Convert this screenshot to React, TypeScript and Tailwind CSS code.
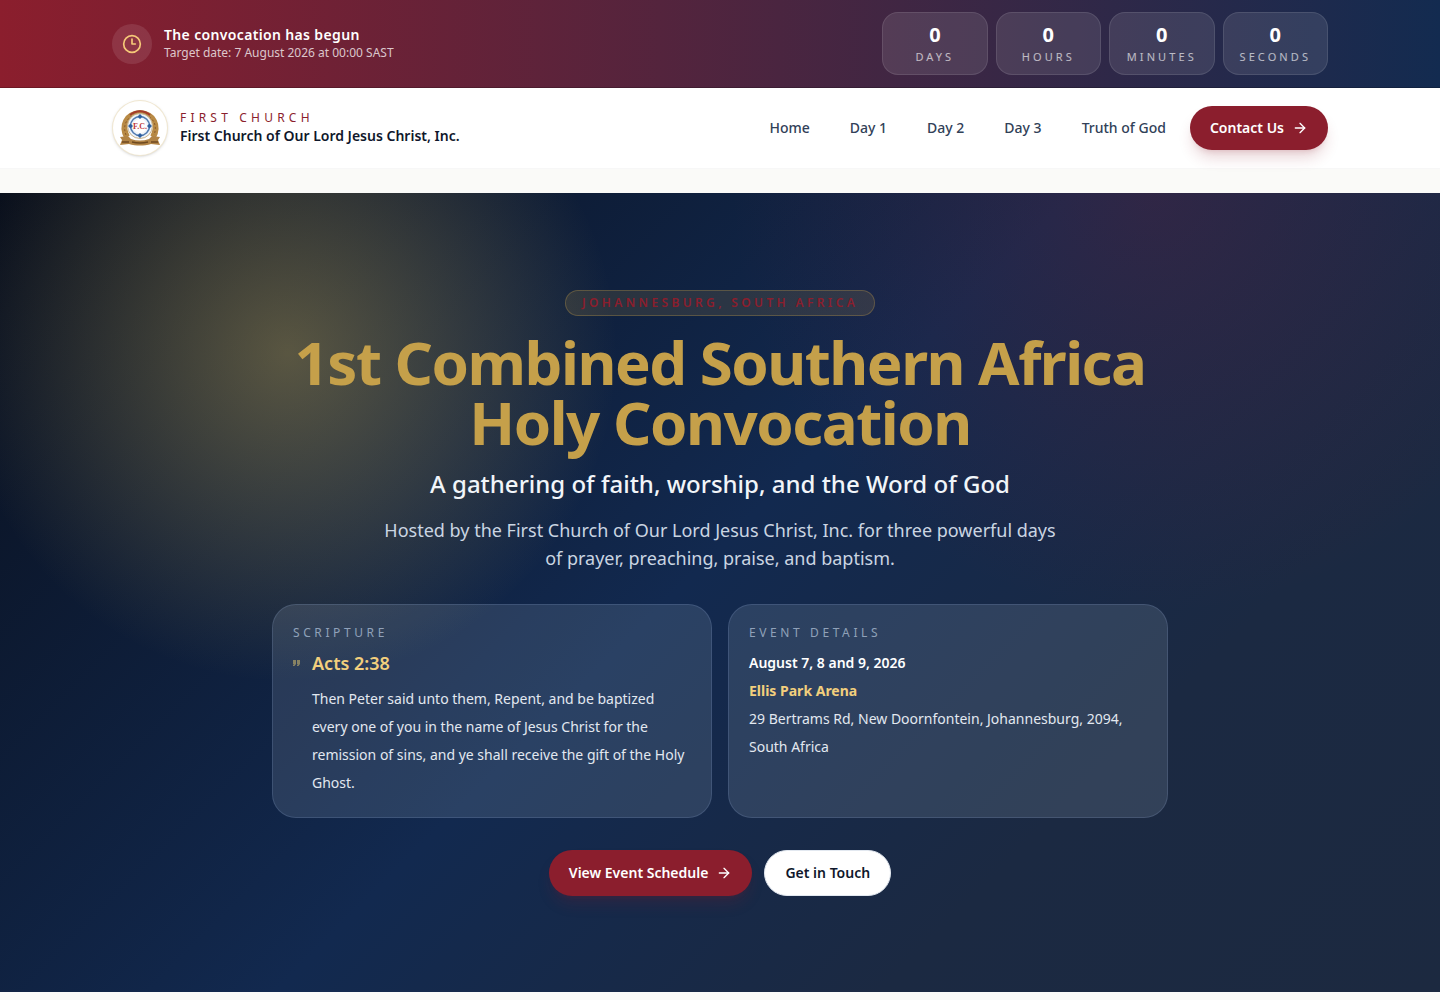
import { ArrowRight, Clock3 } from "lucide-react";

const navItems = ["Home", "Day 1", "Day 2", "Day 3", "Truth of God"];
const countdown = ["Days", "Hours", "Minutes", "Seconds"];

function Crest() {
  return (
    <svg viewBox="0 0 44 44" className="size-11" role="img" aria-label="First Church crest">
      <path d="M9 31C3 20 8 8 22 7c14 1 19 13 13 24" fill="none" stroke="#b88a45" strokeWidth="6" />
      <path d="M8 29C4 19 9 9 22 8c13 1 18 11 14 21" fill="none" stroke="#8a5a2c" strokeWidth="1" strokeDasharray="2 2" />
      <path d="M12 9C18 4 26 4 32 9" fill="none" stroke="#a33b2b" strokeWidth="2" />
      <circle cx="22" cy="20" r="12.500" fill="#eef3f9" stroke="#c9b28a" />
      <circle cx="22" cy="20" r="9.500" fill="none" stroke="#4f7ab0" strokeWidth="1.500" />
      <path d="M22 8l2.500 2.500-2.500 2.500-2.500-2.500zM22 27l2.500 2.500-2.500 2.500-2.500-2.500zM10 20l2.500-2.500 2.500 2.500-2.500 2.500zM29 20l2.500-2.500 2.500 2.500-2.500 2.500z" fill="#2f5f9e" />
      <circle cx="22" cy="20" r="7" fill="#fff" />
      <text x="22" y="23" textAnchor="middle" fontSize="8" fontWeight="700" fontFamily="Liberation Serif, serif" fill="#c03a3a">F.C.</text>
      <path d="M2 31l8-1 3 3c6 2 12 2 18 0l3-3 8 1-2 3 2 5-9-1c-7 2-15 2-22 0l-9 1 2-5z" fill="#b18345" />
      <path d="M4 36h7M33 36h7M14 36c5 1.300 11 1.300 16 0" stroke="#6f4a20" strokeWidth="1.500" fill="none" />
    </svg>
  );
}

export default function App() {
  return (
    <div className="min-h-screen bg-[#fafaf8] font-['Noto_Sans',sans-serif] text-slate-900">
      <div className="border-b border-black/20 bg-[linear-gradient(90deg,#8b1e2d,#132b50)] text-white">
        <div className="mx-auto flex max-w-7xl items-center justify-between gap-4 px-8 py-3">
          <div className="flex items-center gap-3">
            <div className="flex size-10 items-center justify-center rounded-full bg-white/10 text-[#f6c978]">
              <Clock3 size={20} />
            </div>
            <div>
              <p className="text-sm leading-[18px] font-semibold tracking-[0.025em]">The convocation has begun</p>
              <p className="text-xs leading-[18px] text-white/75">Target date: 7 August 2026 at 00:00 SAST</p>
            </div>
          </div>
          <div className="grid grid-cols-4 gap-2">
            {countdown.map((unit) => (
              <div key={unit} className="rounded-2xl border border-white/10 bg-white/10 px-4 pt-2 pb-2.5 text-center">
                <div className="text-xl leading-7 font-bold">0</div>
                <div className="text-[11px] leading-[15px] tracking-[0.28em] text-white/65 uppercase">{unit}</div>
              </div>
            ))}
          </div>
        </div>
      </div>

      <header className="border-b border-black/3 bg-white">
        <div className="mx-auto flex max-w-7xl items-center justify-between gap-6 px-8 py-3">
          <a href="#" className="flex items-center gap-3">
            <span className="flex size-14 items-center justify-center rounded-full border border-[#c9a24a]/25 bg-white shadow-sm">
              <Crest />
            </span>
            <span className="flex flex-col pb-0.5">
              <span className="text-xs leading-[18px] tracking-[0.35em] text-[#8b1e2d] uppercase">First Church</span>
              <span className="text-sm leading-[18px] font-semibold">First Church of Our Lord Jesus Christ, Inc.</span>
            </span>
          </a>
          <nav className="flex items-center gap-1">
            {navItems.map((item) => (
              <a key={item} href="#" className="px-[18px] py-2 text-sm font-medium text-slate-700">
                {item}
              </a>
            ))}
            <a href="#" className="ml-0.5 flex h-11 items-center gap-2 rounded-full bg-[#8b1e2d] px-5 text-sm font-semibold text-white shadow-lg shadow-[#8b1e2d]/20">
              Contact Us
              <ArrowRight size={16} />
            </a>
          </nav>
        </div>
      </header>

      <main className="pt-6 pb-6">
        <section className="bg-[radial-gradient(circle_at_20%_20%,rgba(214,184,92,0.38),transparent_25%),radial-gradient(circle_at_80%_0%,rgba(139,30,45,0.24),transparent_30%),linear-gradient(135deg,#090f1c_0%,#12294f_48%,#1b2942_75%,#1c2940_100%)] px-8 pt-[97px] pb-24">
          <div className="mx-auto flex max-w-4xl flex-col items-center text-center">
            <p className="rounded-full border border-[#c9a24a]/30 bg-[#c9a24a]/15 px-4 py-1 text-xs font-semibold tracking-[0.28em] text-[#8b1e2d] uppercase">
              Johannesburg, South Africa
            </p>
            <h1 className="mt-4 text-6xl leading-none font-bold tracking-tight text-[#c5a04a]">
              1st Combined Southern Africa Holy Convocation
            </h1>
            <p className="mt-4 text-2xl font-medium text-slate-100">A gathering of faith, worship, and the Word of God</p>
            <p className="mt-4 max-w-2xl text-lg leading-7 text-slate-300">
              Hosted by the First Church of Our Lord Jesus Christ, Inc. for three powerful days of prayer, preaching, praise, and baptism.
            </p>
            <div className="mt-8 grid w-full grid-cols-2 gap-4 text-left">
              <article className="rounded-3xl border border-[#b4d2ff]/15 bg-[#dcebff]/12 p-5">
                <h2 className="text-xs tracking-[0.3em] text-slate-400 uppercase">Scripture</h2>
                <div className="mt-2 flex gap-3">
                  <svg viewBox="0 0 7 6" className="mt-[11px] h-1.5 w-[7px] shrink-0 text-[#c5b06a]/60" fill="currentColor" aria-hidden="true">
                    <path d="M0 0h3v4L1.500 6H0V5l1-1H0zM4 0h3v4L5.500 6H4V5l1-1H4z" />
                  </svg>
                  <div>
                    <h3 className="text-lg leading-7 font-semibold text-[#f2cf7d]">Acts 2:38</h3>
                    <p className="mt-2 text-sm leading-7 text-slate-200">
                      Then Peter said unto them, Repent, and be baptized every one of you in the name of Jesus Christ for the remission of sins, and ye shall receive the gift of the Holy Ghost.
                    </p>
                  </div>
                </div>
              </article>
              <article className="rounded-3xl border border-[#b4d2ff]/15 bg-[#dcebff]/12 p-5">
                <h2 className="text-xs tracking-[0.3em] text-slate-400 uppercase">Event Details</h2>
                <div className="mt-2 text-sm leading-7 text-slate-200">
                  <p className="font-semibold text-white">August 7, 8 and 9, 2026</p>
                  <p className="font-bold text-[#f2cf7d]">Ellis Park Arena</p>
                  <p>29 Bertrams Rd, New Doornfontein, Johannesburg, 2094, South Africa</p>
                </div>
              </article>
            </div>
            <div className="mt-8 flex gap-3 text-sm font-semibold">
              <a href="#" className="flex h-[46px] items-center gap-2 rounded-full bg-[#8b1e2d] px-5 text-white shadow-lg shadow-[#8b1e2d]/20">
                View Event Schedule
                <ArrowRight size={16} />
              </a>
              <a href="#" className="flex h-[46px] items-center rounded-full border border-slate-200 bg-white px-5">Get in Touch</a>
            </div>
          </div>
        </section>
      </main>
    </div>
  );
}
